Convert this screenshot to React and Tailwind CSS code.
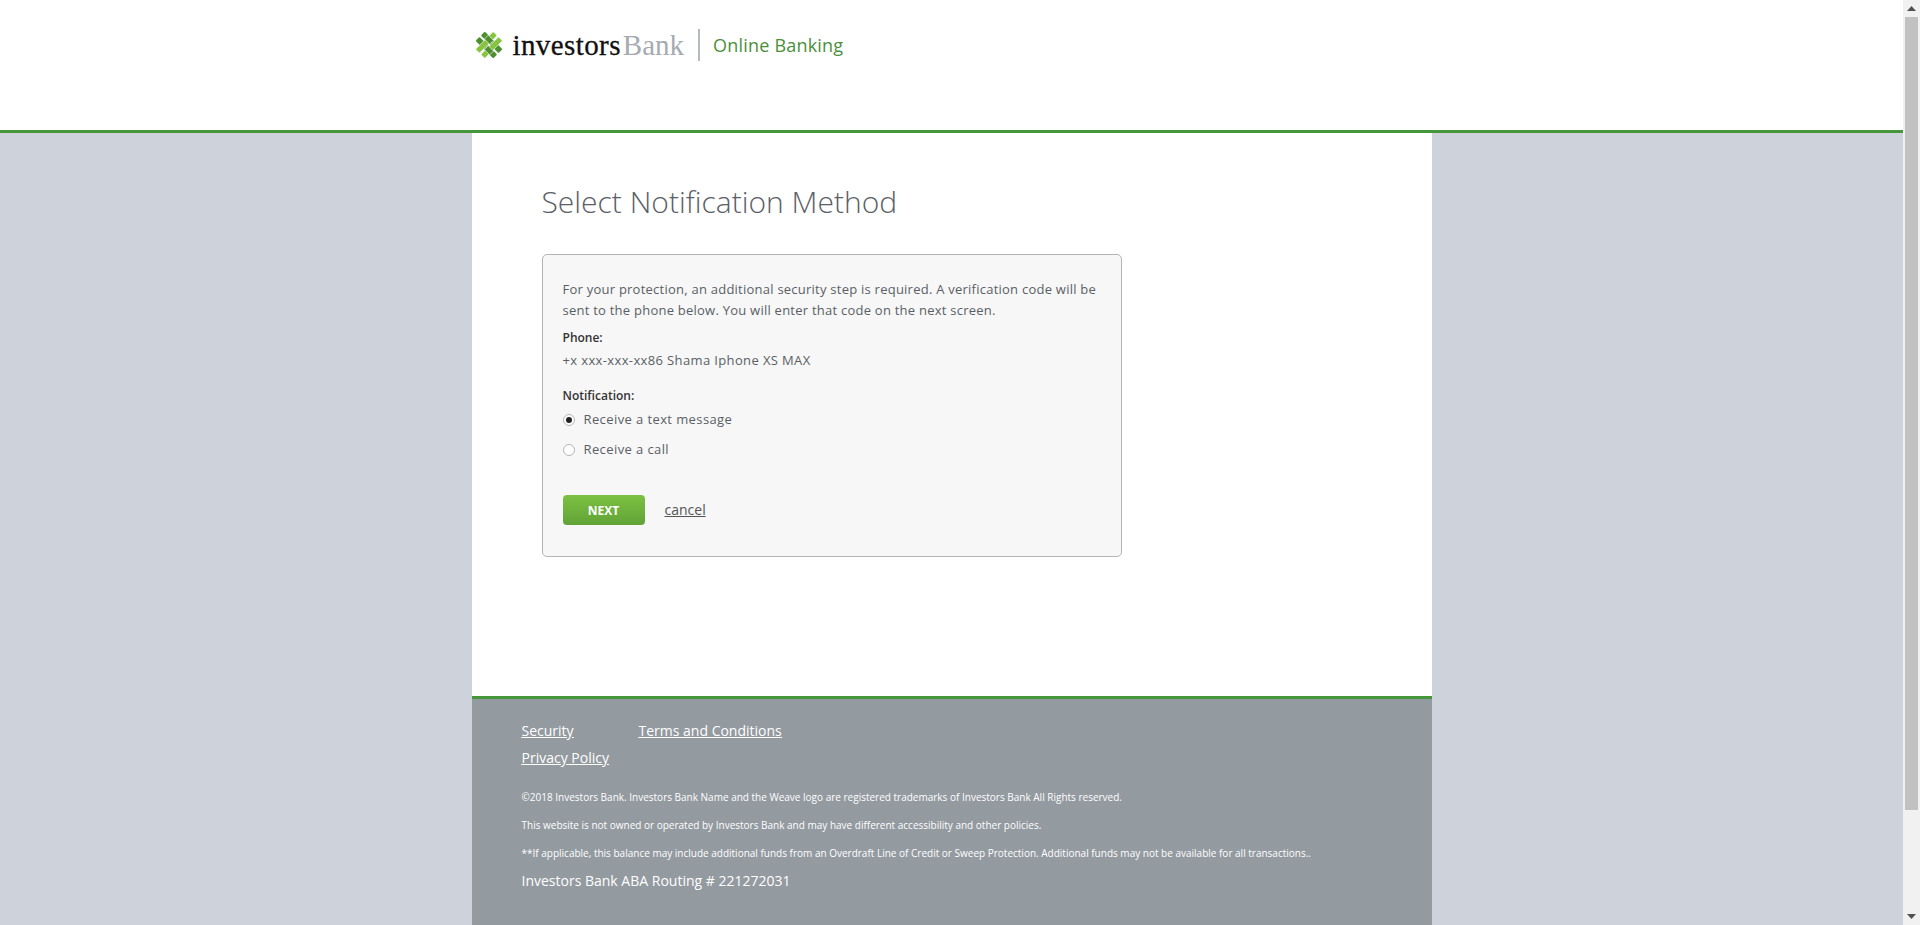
export default function App() {
  const sans = "font-['Open_Sans','Liberation_Sans',sans-serif]";
  return (
    <div className={`flex h-[925px] w-full overflow-hidden ${sans}`}>
      <div className="flex min-w-0 flex-1 flex-col bg-[#cdd2db]">
        <header className="h-[133px] shrink-0 border-b-[3px] border-[#46963c] bg-white">
          <div className="mx-auto flex w-[960px] items-start pl-[3px] pt-[29px]">
            <svg width="28" height="28" viewBox="0 0 28 28" className="mt-[2px]">
              <g transform="rotate(-45 14 14)">
                <rect x="7.5" y="1.5" width="5.5" height="25" rx="1" fill="#4d8f2f" />
                <rect x="15" y="1.5" width="5.5" height="25" rx="1" fill="#4d8f2f" />
                <rect x="1.5" y="7.5" width="25" height="5.5" rx="1" fill="#86c440" stroke="#fff" strokeWidth="0.6" />
                <rect x="1.5" y="15" width="25" height="5.5" rx="1" fill="#86c440" stroke="#fff" strokeWidth="0.6" />
                <rect x="15" y="6.5" width="5.5" height="7.5" fill="#4d8f2f" stroke="#fff" strokeWidth="0.6" />
                <rect x="7.5" y="14" width="5.5" height="7.5" fill="#4d8f2f" stroke="#fff" strokeWidth="0.6" />
              </g>
            </svg>
            <div className="ml-[10px] flex h-[32px] items-center font-['Liberation_Serif',serif] text-[29px] leading-none">
              <span className="tracking-[0.4px] text-[#111] [-webkit-text-stroke:0.3px_#111]">investors</span>
              <span className="ml-[2px] text-[#a5abb2]">Bank</span>
            </div>
            <div className="ml-[14px] h-[32px] w-[2px] bg-[#b5babd]" />
            <div className="ml-[13px] flex h-[32px] items-center text-[18px] leading-none tracking-[0.2px] text-[#4a8f3a]">Online Banking</div>
          </div>
        </header>

        <div className="mx-auto flex w-[960px] flex-1 flex-col">
          <main className="h-[563px] shrink-0 bg-white pl-[70px]">
            <h1 className="pt-[47px] text-[30px] font-light leading-[44px] text-[#5b6067]">Select Notification Method</h1>
            <section className="mt-[30px] h-[303px] w-[580px] rounded-[5px] border border-[#b4b4b4] bg-[#f7f7f7] px-[20px] pt-[24px] text-[13px] text-[#5a5f66]">
              <p className="leading-[20.5px] tracking-[0.24px]">
                For your protection, an additional security step is required. A verification code will be sent to the phone below. You will enter that code on the next screen.
              </p>
              <div className="mt-[8px] text-[12px] font-semibold leading-[20px] text-[#333]">Phone:</div>
              <div className="mt-[2px] leading-[20px] tracking-[0.37px]">+x xxx-xxx-xx86 Shama Iphone XS MAX</div>
              <div className="mt-[16px] text-[12px] font-semibold leading-[20px] text-[#333]">Notification:</div>
              <label className="mt-[4px] flex h-[20px] items-center tracking-[0.4px]">
                <span className="flex h-[12px] w-[12px] items-center justify-center rounded-full border border-[#b5b5b5] bg-white">
                  <span className="h-[6px] w-[6px] rounded-full bg-[#222]" />
                </span>
                <span className="ml-[9px]">Receive a text message</span>
              </label>
              <label className="mt-[10px] flex h-[20px] items-center tracking-[0.4px]">
                <span className="h-[12px] w-[12px] rounded-full border border-[#b5b5b5] bg-white" />
                <span className="ml-[9px]">Receive a call</span>
              </label>
              <div className="mt-[35px] flex items-center">
                <button className="h-[30px] w-[82px] rounded-[4px] bg-gradient-to-b from-[#7cc143] to-[#61a336] pt-[1px] text-[12px] font-bold text-white">NEXT</button>
                <a className="ml-[20px] -translate-y-px text-[14px] text-[#555] underline">cancel</a>
              </div>
            </section>
          </main>

          <footer className="flex-1 border-t-[3px] border-[#46963c] bg-[#939aa0] pl-[50px] pt-[21px] text-white">
            <div className="flex text-[14px] leading-[22px] underline">
              <a className="w-[117px]">Security</a>
              <a>Terms and Conditions</a>
            </div>
            <div className="mt-[5px] text-[14px] leading-[22px] underline"><a>Privacy Policy</a></div>
            <div className="mt-[22px] text-[10px] leading-[12px]">©2018 Investors Bank. Investors Bank Name and the Weave logo are registered trademarks of Investors Bank All Rights reserved.</div>
            <div className="mt-[16px] text-[10px] leading-[12px]">This website is not owned or operated by Investors Bank and may have different accessibility and other policies.</div>
            <div className="mt-[16px] text-[10px] leading-[12px]">**If applicable, this balance may include additional funds from an Overdraft Line of Credit or Sweep Protection. Additional funds may not be available for all transactions..</div>
            <div className="mt-[12px] text-[14px] leading-[20px]">Investors Bank ABA Routing # 221272031</div>
          </footer>
        </div>
      </div>

      <div className="flex w-[17px] shrink-0 flex-col bg-[#f1f1f1]">
        <div className="flex h-[17px] items-center justify-center">
          <svg width="9" height="5" viewBox="0 0 9 5"><path d="M4.5 0L9 5H0z" fill="#505050" /></svg>
        </div>
        <div className="ml-[2px] h-[793px] w-[13px] bg-[#c1c1c1]" />
        <div className="flex-1" />
        <div className="flex h-[17px] items-center justify-center">
          <svg width="9" height="5" viewBox="0 0 9 5"><path d="M0 0H9L4.5 5z" fill="#505050" /></svg>
        </div>
      </div>
    </div>
  );
}
